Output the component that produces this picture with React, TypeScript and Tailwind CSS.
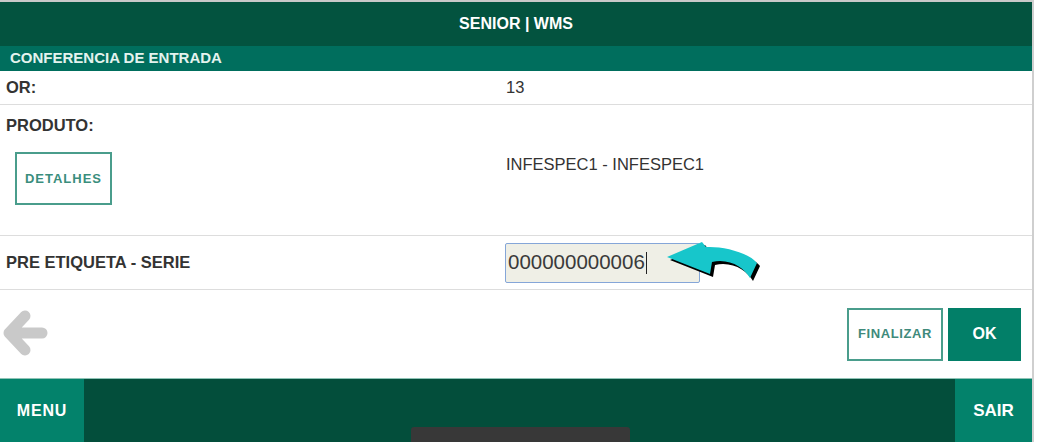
import React from 'react';

const font = { fontFamily: '"Liberation Sans", Arial, sans-serif' };

function BackArrow() {
  return (
    <svg width="50" height="52" viewBox="0 0 50 52">
      <path
        d="M42 25 H9 M25 8 L9 25 L25 42"
        fill="none"
        stroke="#c9c9c9"
        strokeWidth="11"
        strokeLinecap="round"
        strokeLinejoin="round"
      />
    </svg>
  );
}

function CurvedArrow() {
  const d =
    'M7 19 L42 4 L46 9 C62 8 88 14 97 25 L90 40 C84 30 70 20 52 24 L50 36 Z';
  return (
    <svg width="104" height="46" viewBox="0 0 104 46" className="absolute left-[660px] top-[238px]">
      <path d={d} transform="translate(3 3)" fill="#000" />
      <path d={d} fill="#17c6cb" />
    </svg>
  );
}

export default function App() {
  return (
    <div className="relative w-[1041px] h-[442px] overflow-hidden bg-white" style={font}>
      <div className="w-[1034px] h-full border-r-2 border-[#cfcfcf] flex flex-col">
        {/* top bar */}
        <div className="h-[2px] bg-[#c9c9c9]" />
        <div className="h-[44px] bg-[#03533f] flex items-center justify-center text-white text-[16px] font-bold">
          SENIOR | WMS
        </div>
        <div className="h-[25px] bg-[#006e5d] flex items-center px-[10px] text-[#e3f3ee] text-[15px] font-bold">
          CONFERENCIA DE ENTRADA
        </div>

        {/* rows */}
        <div className="h-[34px] flex items-center border-b border-[#dddddd] text-[16.5px] text-[#333]">
          <div className="w-[506px] pl-[6px] font-bold">OR:</div>
          <div>13</div>
        </div>
        <div className="h-[131px] flex border-b border-[#dddddd] text-[16.5px] text-[#333]">
          <div className="w-[506px] pl-[6px] pt-[8px]">
            <div className="font-bold">PRODUTO:</div>
            <button className="mt-[14px] ml-[9px] w-[97px] h-[53px] border-2 border-[#4a9d8c] text-[#3a8e7d] text-[13px] font-bold tracking-[1px] bg-white">
              DETALHES
            </button>
          </div>
          <div className="pt-[47px]">INFESPEC1 - INFESPEC1</div>
        </div>
        <div className="h-[54px] flex items-center border-b border-[#dddddd] text-[16.5px] text-[#333]">
          <div className="w-[505px] pl-[6px] font-bold">PRE ETIQUETA - SERIE</div>
          <div className="w-[195px] h-[40px] border border-[#85a6d8] rounded-[2px] bg-[#efefe6] flex items-center pl-[2px] text-[20.5px] text-[#3a3a3a]">
            000000000006<span className="w-px h-[22px] bg-[#222] ml-[1px]" />
          </div>
        </div>

        {/* actions */}
        <div className="h-[88px] flex items-center justify-between pl-[0px] pr-[11px]">
          <BackArrow />
          <div className="flex gap-[5px]">
            <button className="w-[96px] h-[53px] border-2 border-[#4a9d8c] bg-white text-[#3f8a7b] text-[13px] font-bold tracking-[0.6px]">
              FINALIZAR
            </button>
            <button className="w-[73px] h-[53px] bg-[#027f68] text-white text-[16px] font-bold">
              OK
            </button>
          </div>
        </div>

        {/* footer */}
        <div className="h-[64px] border-t border-[#8fc4b6] bg-[#034e3b] flex justify-between text-white text-[16px] font-bold">
          <div className="w-[84px] bg-[#03826b] flex items-center justify-center tracking-[0.8px]">MENU</div>
          <div className="w-[77px] bg-[#03826b] flex items-center justify-center text-[17px]">SAIR</div>
        </div>
      </div>

      <CurvedArrow />
      <div className="absolute left-[411px] top-[427px] w-[219px] h-[20px] rounded-[3px] bg-[#383838]" />
    </div>
  );
}
